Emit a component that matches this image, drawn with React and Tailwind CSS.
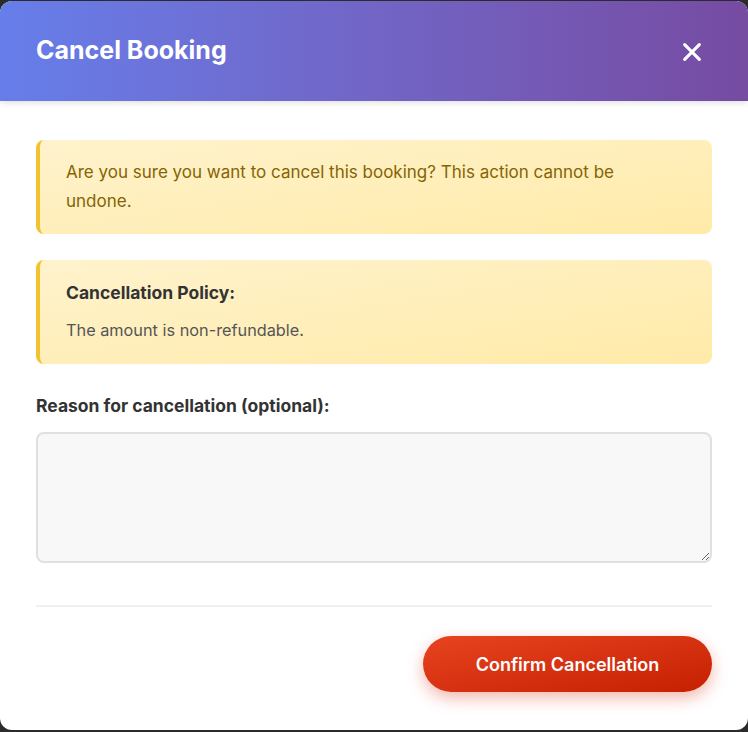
import React from "react";

export default function App() {
  return (
    <div className="w-[748px] h-[732px] bg-[#2b2b2b] pt-px pb-[2px] overflow-hidden" style={{ fontFamily: "Inter, 'Noto Sans', sans-serif" }}>
      <div className="h-full bg-white rounded-[12px] overflow-hidden flex flex-col">
        <div className="h-[100px] shrink-0 bg-gradient-to-r from-[#667eea] to-[#764ba2] flex items-center justify-between pl-[36px] pr-[45px] shadow-[0_2px_6px_rgba(0,0,0,0.12)]">
          <h2 className="text-[25px] font-bold text-white leading-none -mt-[2px]">Cancel Booking</h2>
          <button className="text-white mt-[2px]">
            <svg width="22" height="22" viewBox="0 0 24 24" fill="none" stroke="currentColor" strokeWidth="3.4" strokeLinecap="round">
              <path d="M4 4L20 20M20 4L4 20" />
            </svg>
          </button>
        </div>
        <div className="px-[36px] pt-[39px] flex flex-col">
          <div className="rounded-[8px] border-l-4 border-[#f2c230] bg-gradient-to-br from-[#fff3cd] to-[#ffeaa7] pl-[26px] pr-[44px] py-[18px] text-[17px] leading-[29px] text-[#856404]">
            Are you sure you want to cancel this booking? This action cannot be undone.
          </div>
          <div className="mt-[26px] rounded-[8px] border-l-4 border-[#f2c230] bg-gradient-to-br from-[#fff3cd] to-[#ffeaa7] pl-[26px] pr-[24px] pt-[21px] pb-[22px]">
            <div className="text-[17.5px] font-bold text-[#333] leading-[24px]">Cancellation Policy:</div>
            <div className="mt-[13px] text-[16.3px] text-[#555] leading-[24px]">The amount is non-refundable.</div>
          </div>
          <label className="mt-[30px] text-[17.5px] font-bold text-[#333] leading-[24px]">Reason for cancellation (optional):</label>
          <textarea className="mt-[14px] h-[131px] w-full rounded-[8px] border-2 border-[#e0e0e0] bg-[#f8f8f8] outline-none resize-y" />
          <div className="mt-[42px] h-[2px] bg-[#f0f0f0]" />
          <div className="mt-[29px] flex justify-end">
            <button className="h-[56px] w-[289px] rounded-full bg-gradient-to-br from-[#e8431f] to-[#c51f00] text-white text-[18px] font-semibold shadow-[0_6px_16px_rgba(220,50,20,0.35)]">
              Confirm Cancellation
            </button>
          </div>
        </div>
      </div>
    </div>
  );
}
